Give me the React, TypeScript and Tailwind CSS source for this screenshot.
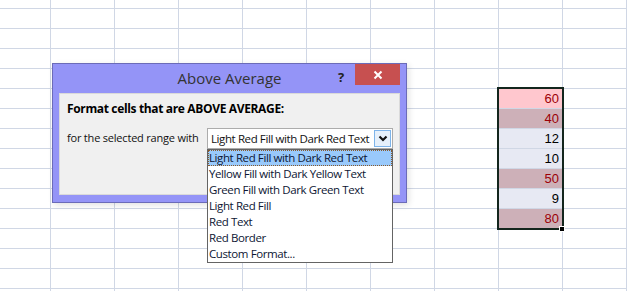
import React from "react";

const values = [
  { v: "60", bg: "bg-[#ffc7ce]", red: true },
  { v: "40", bg: "bg-[#cdb0b8]", red: true },
  { v: "12", bg: "bg-[#e7e9f3]", red: false },
  { v: "10", bg: "bg-[#e7e9f3]", red: false },
  { v: "50", bg: "bg-[#cdb0b8]", red: true },
  { v: "9", bg: "bg-[#e7e9f3]", red: false },
  { v: "80", bg: "bg-[#cdb0b8]", red: true },
];

const options = [
  "Light Red Fill with Dark Red Text",
  "Yellow Fill with Dark Yellow Text",
  "Green Fill with Dark Green Text",
  "Light Red Fill",
  "Red Text",
  "Red Border",
  "Custom Format...",
];

const COLS = 11;
const ROWS = 16;

function Sheet() {
  const cells = [];
  for (let r = 0; r < ROWS; r++) {
    for (let c = 0; c < COLS; c++) {
      const hit = c === 8 && r >= 5 && r <= 11 ? values[r - 5] : null;
      cells.push(
        <div
          key={`${r}-${c}`}
          className={`border-r border-b border-[#d0d7e5] flex items-center justify-end pr-[3px] text-[13px] font-['Liberation_Sans',sans-serif] ${
            hit ? hit.bg : "bg-white"
          } ${hit && hit.red ? "text-[#9c0006]" : "text-black"}`}
        >
          {hit ? hit.v : null}
        </div>
      );
    }
  }
  return (
    <div className="-ml-[13px] -mt-[11px] grid grid-cols-[repeat(11,64px)] grid-rows-[repeat(16,20px)]">
      {cells}
    </div>
  );
}

function Chevron() {
  return (
    <svg width="10" height="7" viewBox="0 0 10 7">
      <polyline points="1.5,1.5 5,5 8.5,1.5" fill="none" stroke="#111" strokeWidth="2.2" />
    </svg>
  );
}

export default function App() {
  return (
    <div className="relative w-[627px] h-[291px] overflow-hidden bg-white font-['Open_Sans','Noto_Sans',sans-serif]">
      <Sheet />

      {/* selection */}
      <div className="absolute left-[497px] top-[87px] w-[67px] h-[143px] border-2 border-[#13261d]" />
      <div className="absolute left-[559px] top-[226px] w-[6px] h-[6px] bg-black border border-white" />

      {/* dialog */}
      <div className="absolute left-[52px] top-[63px] w-[355px] h-[140px] bg-[#9494f7] border border-[#6b6bb8] shadow-[2px_2px_6px_rgba(0,0,0,0.12)] flex flex-col">
        <div className="relative h-[29px] flex items-center justify-center">
          <span className="text-[15px] text-[#333] leading-none">Above Average</span>
          <span className="absolute left-[285px] top-[4px] text-[13px] font-bold text-[#222]">?</span>
          <div className="absolute right-[6px] top-0 w-[45px] h-[21px] bg-[#c75050] flex items-center justify-center">
            <svg width="10" height="10" viewBox="0 0 10 10">
              <path d="M1.5 1.5 L8.5 8.5 M8.5 1.5 L1.5 8.5" stroke="#fff" strokeWidth="2" />
            </svg>
          </div>
        </div>
        <div className="mx-[6px] h-[102px] bg-[#f0f0f0] border border-[#dadada] pl-[7px] pt-[7px]">
          <div className="text-[12px] font-bold text-black leading-[16px] tracking-[-0.35px] whitespace-nowrap">
            Format cells that are ABOVE AVERAGE:
          </div>
          <div className="mt-[11px] flex items-center">
            <span className="w-[140px] shrink-0 whitespace-nowrap text-[11px] text-[#111] tracking-[-0.2px]">
              for the selected range with
            </span>
            <div className="w-[186px] h-[21px] shrink-0 bg-white border border-[#acacac] flex items-center justify-between pl-[3px] pr-[1px]">
              <span className="whitespace-nowrap text-[11.5px] text-[#111] tracking-[-0.4px]">
                Light Red Fill with Dark Red Text
              </span>
              <div className="w-[17px] h-[17px] bg-[#e6f0fb] border border-[#7eb4ea] flex items-center justify-center">
                <Chevron />
              </div>
            </div>
          </div>
        </div>
      </div>

      {/* open list */}
      <div className="absolute left-[207px] top-[149px] w-[186px] bg-white border border-[#646464] flex flex-col">
        {options.map((o, i) => (
          <div
            key={o}
            className={`h-[16px] flex items-center whitespace-nowrap text-[11.5px] leading-none text-[#0d1633] tracking-[-0.4px] ${
              i === 0 ? "bg-[#99c9fb] border border-dotted border-[#8a5a2a]" : "pl-[1px]"
            }`}
          >
            {o}
          </div>
        ))}
      </div>
    </div>
  );
}
